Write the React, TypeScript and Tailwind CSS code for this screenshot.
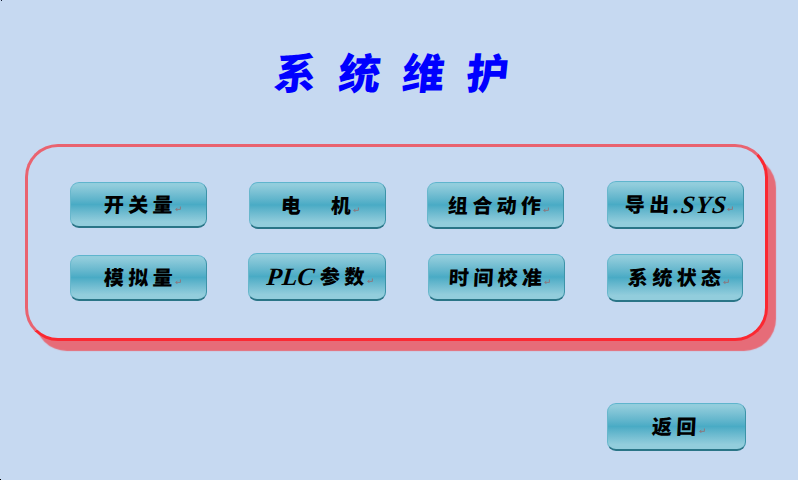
import React from 'react';

const han =
  "font-['Noto_Sans_CJK_SC','Noto_Sans_CJK_TC',sans-serif] font-black text-[20px] tracking-[4.3px] -skew-x-3";
const latin =
  "font-['Liberation_Serif',serif] font-bold italic text-[25px] -skew-x-6";

function Mark() {
  return (
    <svg viewBox="0 0 6 6" className="-ml-[2px] mt-[10px] h-[6px] w-[6px] shrink-0" fill="none" stroke="#8d7479" strokeWidth="0.9">
      <path d="M5.4 0.5V3.4H0.8M2.4 1.8L0.8 3.4L2.4 5" />
    </svg>
  );
}

function Key({ box, children }: { box: string; children: React.ReactNode }) {
  return (
    <button
      className={`flex items-center whitespace-pre rounded-[9px] border border-t-[#5fb5cd] border-l-[#68b7cc] border-r-[#3c93a8] border-b-2 border-b-[#2a7587] bg-linear-to-b from-[#92cddc] from-5% via-[#49abc5] via-50% to-[#92cddc] to-90% pb-px text-left leading-none text-black ${box}`}
    >
      {children}
      <Mark />
    </button>
  );
}

function Han({ children, className = '' }: { children: string; className?: string }) {
  return <span className={`block shrink-0 ${han} ${className}`}>{children}</span>;
}

export default function App() {
  return (
    <main className="h-[480px] w-[798px] overflow-hidden bg-[#c6d9f1]">
      <div className="h-px w-px translate-x-px bg-[#10182c]" />
      <h1 className="flex h-[143px] pl-[275px] pt-[49px] font-['Noto_Sans_CJK_SC','Noto_Sans_CJK_TC',sans-serif] text-[42px] leading-[42px] font-black tracking-[22px] text-[#0000ff]">
        <span className="block h-[42px] -skew-x-6">系统维护</span>
      </h1>
      <section className="ml-[25px] h-[197px] w-[743px] rounded-[33px] border-[3px] border-t-[#e96370] border-l-[#e96370] border-r-[#fb2831] border-b-[#fb2831] bg-[#c6d9f1] pl-[42px] pt-[34px] shadow-[9px_11px_1px_-1px_#e66c78]">
        <div className="flex h-[72px] items-start">
          <Key box="mt-px h-[46px] w-[137px] pl-[33px]"><Han>开关量</Han></Key>
          <Key box="mt-px ml-[42px] h-[47px] w-[137px] pl-[31px]"><Han className="w-[50px]">电</Han><Han>机</Han></Key>
          <Key box="mt-px ml-[41px] h-[47px] w-[137px] pl-[20px]"><Han>组合动作</Han></Key>
          <Key box="ml-[43px] h-[48px] w-[137px] pl-[17px]"><Han>导出</Han><span className={`block w-[55px] tracking-[1px] ${latin}`}>.SYS</span></Key>
        </div>
        <div className="flex items-start">
          <Key box="mt-[2px] h-[46px] w-[137px] pl-[33px]"><Han>模拟量</Han></Key>
          <Key box="ml-[41px] h-[48px] w-[138px] pl-[18px]"><span className={`block w-[53px] ${latin}`}>PLC</span><Han>参数</Han></Key>
          <Key box="mt-px ml-[42px] h-[47px] w-[137px] pl-[20px]"><Han>时间校准</Han></Key>
          <Key box="mt-px ml-[42px] h-[48px] w-[136px] pl-[20px]"><Han>系统状态</Han></Key>
        </div>
      </section>
      <div className="pl-[607px] pt-[62px]">
        <Key box="h-[48px] w-[139px] pl-[44px]"><Han>返回</Han></Key>
      </div>
      <div className="mt-[28px] h-px w-px bg-black" />
    </main>
  );
}
